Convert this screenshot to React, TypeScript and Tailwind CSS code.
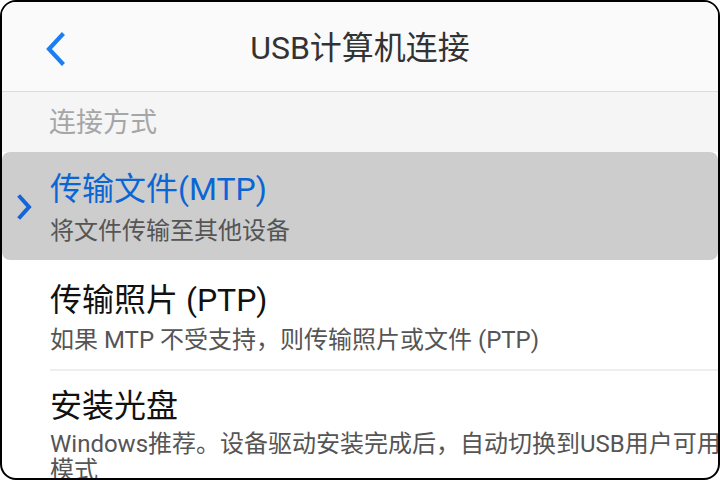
import React from "react";

const font = { fontFamily: "Roboto, 'Noto Sans CJK SC', 'Noto Sans', sans-serif" };

export default function App() {
  return (
    <div className="w-[720px] h-[480px] bg-white">
      <div
        className="w-[720px] h-[480px] overflow-hidden rounded-[16px] border-2 border-black bg-white flex flex-col"
        style={font}
      >
        {/* Header */}
        <div className="relative h-[90px] shrink-0 bg-[#fafafa] flex items-center justify-center border-b border-[#dcdcdc]">
          <svg
            className="absolute left-[41px] top-[29px]"
            width="26"
            height="36"
            viewBox="0 0 26 36"
            fill="none"
          >
            <path d="M19 4 L6 18 L19 32" stroke="#1a7ff2" strokeWidth="4.2" strokeLinecap="square" strokeLinejoin="miter" />
          </svg>
          <div className="text-[32px] leading-none text-[#333333] pt-[2px]">USB计算机连接</div>
        </div>

        {/* Section header */}
        <div className="h-[60px] shrink-0 bg-[#f5f5f5] flex items-center pl-[47px]">
          <span className="text-[27px] leading-none text-[#a6a6a6] pt-[3px]">连接方式</span>
        </div>

        {/* Selected row */}
        <div className="relative h-[108px] shrink-0 bg-[#cdcdcd] rounded-[8px] pl-[48px] pr-[8px] flex flex-col justify-start pt-[18px]">
          <svg
            className="absolute left-[13px] top-[41px]"
            width="20"
            height="28"
            viewBox="0 0 20 28"
            fill="none"
          >
            <path d="M5 4 L14 14 L5 24" stroke="#1565d8" strokeWidth="4" strokeLinecap="square" />
          </svg>
          <div className="text-[32px] leading-[38px] text-[#0b66d4]">传输文件(MTP)</div>
          <div className="text-[24px] leading-[30px] text-[#555555] mt-[8px]">将文件传输至其他设备</div>
        </div>

        {/* Row 2 */}
        <div className="shrink-0 pl-[48px] pt-[21px]">
          <div className="text-[32px] leading-[38px] text-[#111111]">传输照片 (PTP)</div>
          <div className="text-[24px] leading-[30px] text-[#555555] mt-[6px] pb-[14px] border-b-2 border-[#eeeeee]">
            如果 MTP 不受支持，则传输照片或文件 (PTP)
          </div>
        </div>

        {/* Row 3 */}
        <div className="shrink-0 pl-[48px] pt-[16px]">
          <div className="text-[32px] leading-[38px] text-[#111111]">安装光盘</div>
          <div className="w-[686px] text-[24px] leading-[26px] text-[#555555] mt-[6px]">
            Windows推荐。设备驱动安装完成后，自动切换到USB用户可用模式
          </div>
        </div>
      </div>
    </div>
  );
}
